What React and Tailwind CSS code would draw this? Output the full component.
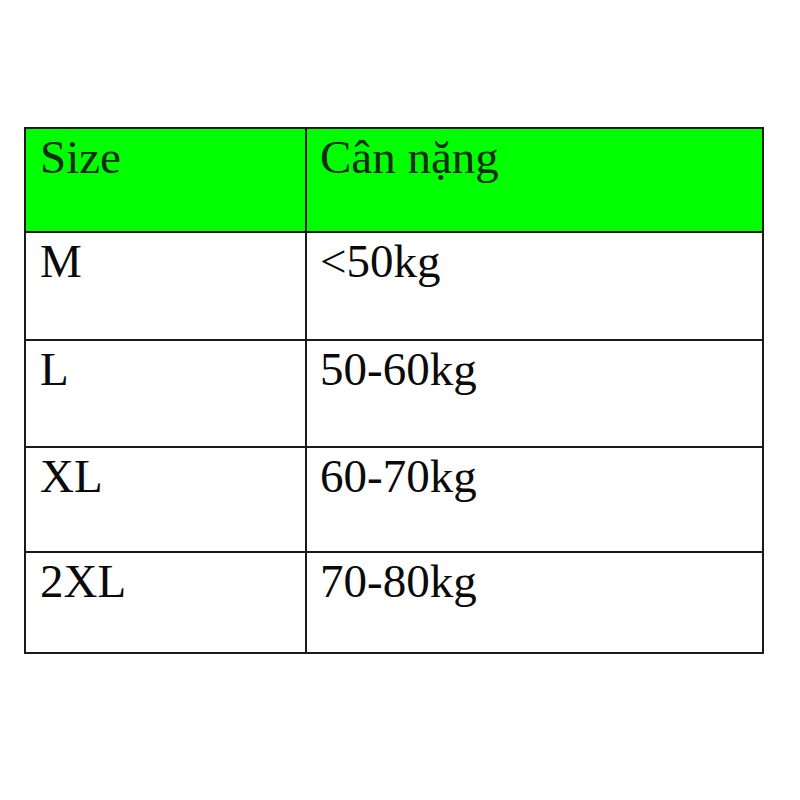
const rows = [
  { size: "M", weight: "<50kg", h: "h-[108px]" },
  { size: "L", weight: "50-60kg", h: "h-[107px]" },
  { size: "XL", weight: "60-70kg", h: "h-[105px]" },
  { size: "2XL", weight: "70-80kg", h: "h-[101px]" },
];

export default function App() {
  return (
    <div className="w-[800px] h-[800px] bg-white pt-[127px] pl-[24px] font-['Liberation_Serif','Times_New_Roman',serif]">
      <div className="w-[740px] border-2 border-[#1a1a1a] text-[47px] leading-none text-[#0a0a0a]">
        {/* header */}
        <div className="flex h-[102px] bg-[#00ff00] text-[#0f2a0f]">
          <div className="w-[279px] pl-[14px] pt-[5px]">Size</div>
          <div className="flex-1 border-l-2 border-[#1a1a1a] pl-[13px] pt-[5px]">Cân nặng</div>
        </div>

        {rows.map((r) => (
          <div key={r.size} className={`flex border-t-2 border-[#1a1a1a] ${r.h}`}>
            <div className="w-[279px] pl-[14px] pt-[5px]">{r.size}</div>
            <div className="flex-1 border-l-2 border-[#1a1a1a] pl-[13px] pt-[5px]">{r.weight}</div>
          </div>
        ))}
      </div>
    </div>
  );
}
